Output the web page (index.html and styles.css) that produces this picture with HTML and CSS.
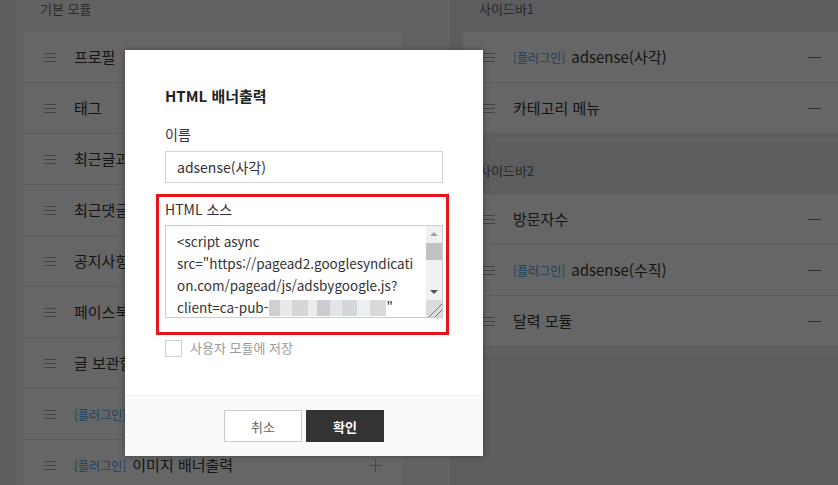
FILE: index.html
```html
<!DOCTYPE html>
<html lang="ko">

<head>
    <meta charset="UTF-8">
    <meta name="viewport" content="width=device-width, initial-scale=1.0">
    <title>사이드바 설정</title>
    <link rel="stylesheet" href="styles.css">
</head>

<body>

    <div class="board">
        <section class="col col--modules">
            <h3 class="col__title">기본 모듈</h3>
            <ul class="module-list">
                <li class="module"><span class="module__handle"></span><span class="module__name">프로필</span><span class="module__add"></span></li>
                <li class="module"><span class="module__handle"></span><span class="module__name">태그</span><span class="module__add"></span></li>
                <li class="module"><span class="module__handle"></span><span class="module__name">최근글과 인기글</span><span class="module__add"></span></li>
                <li class="module"><span class="module__handle"></span><span class="module__name">최근댓글</span><span class="module__add"></span></li>
                <li class="module"><span class="module__handle"></span><span class="module__name">공지사항</span><span class="module__add"></span></li>
                <li class="module"><span class="module__handle"></span><span class="module__name">페이스북</span><span class="module__add"></span></li>
                <li class="module"><span class="module__handle"></span><span class="module__name">글 보관함</span><span class="module__add"></span></li>
                <li class="module"><span class="module__handle"></span><span class="module__name"><span class="module__tag">[플러그인]</span>HTML 배너출력</span><span class="module__add"></span></li>
                <li class="module"><span class="module__handle"></span><span class="module__name"><span class="module__tag">[플러그인]</span>이미지 배너출력</span><span class="module__add"></span></li>
            </ul>
        </section>

        <div class="board__gap"></div>

        <section class="col col--sidebars">
            <div class="sidebar">
                <h3 class="col__title">사이드바1</h3>
                <ul class="module-list">
                    <li class="module"><span class="module__handle"></span><span class="module__name"><span class="module__tag">[플러그인]</span>adsense(사각)</span><span class="module__remove"></span></li>
                    <li class="module"><span class="module__handle"></span><span class="module__name">카테고리 메뉴</span><span class="module__remove"></span></li>
                </ul>
            </div>
            <div class="sidebar">
                <h3 class="col__title">사이드바2</h3>
                <ul class="module-list">
                    <li class="module"><span class="module__handle"></span><span class="module__name">방문자수</span><span class="module__remove"></span></li>
                    <li class="module"><span class="module__handle"></span><span class="module__name"><span class="module__tag">[플러그인]</span>adsense(수직)</span><span class="module__remove"></span></li>
                    <li class="module"><span class="module__handle"></span><span class="module__name">달력 모듈</span><span class="module__remove"></span></li>
                </ul>
            </div>
        </section>
    </div>

    <div class="dim"></div>

    <div class="modal">
        <div class="modal__body">
            <h2 class="modal__title">HTML 배너출력</h2>

            <label class="field__label">이름</label>
            <div class="input">adsense(사각)</div>

            <div class="field field--marked">
                <label class="field__label field__label--tight">HTML 소스</label>
                <div class="code">
                    <div class="code__text">
                        <div>&lt;script async</div>
                        <div>src="https://pagead2.googlesyndicati</div>
                        <div>on.com/pagead/js/adsbygoogle.js?</div>
                        <div>client=ca-pub-<span class="code__blur"></span>"</div>
                    </div>
                    <div class="code__bar">
                        <span class="code__arrow code__arrow--up"></span>
                        <span class="code__thumb"></span>
                        <span class="code__track"></span>
                        <span class="code__arrow code__arrow--down"></span>
                        <span class="code__grip"></span>
                    </div>
                </div>
            </div>

            <label class="check">
                <span class="check__box"></span>
                <span class="check__text">사용자 모듈에 저장</span>
            </label>
        </div>

        <div class="modal__foot">
            <button class="btn">취소</button>
            <button class="btn btn--primary">확인</button>
        </div>
    </div>

</body>

</html>
```

FILE: styles.css
```css
body{
    margin: 0;
    width: 838px;
    height: 485px;
    overflow: hidden;
    position: relative;
    background-color: #e6e8ec;
    font-family: "Noto Sans CJK KR", "Noto Sans", sans-serif;
    color: #333;
}

ul{
    margin: 0;
    padding: 0;
    list-style: none;
}

/* board behind the popup */
.board{
    display: flex;
    align-items: flex-start;
    margin-top: -20px;
    padding-left: 15px;
}

.col--modules{
    flex: none;
    width: 395px;
    box-sizing: border-box;
    padding: 0 8px 60px 9px;
    background-color: #f5f5f6;
}

.board__gap{
    flex: none;
    width: 40px;
    align-self: stretch;
    background-color: #f8f8f8;
}

.col--sidebars{
    flex: none;
    width: 391px;
    box-sizing: border-box;
    padding-left: 13px;
}

.col__title{
    margin: 0;
    height: 52px;
    box-sizing: border-box;
    padding: 20px 0 0 16px;
    font-size: 13px;
    line-height: 18px;
    font-weight: normal;
    color: #666;
}

.sidebar .module-list{
    padding-bottom: 7px;
    border-bottom: 1px solid #f6f6f6;
    background-color: #f0f1f2;
}

.module{
    display: flex;
    align-items: center;
    height: 50px;
    padding: 0 20px;
    background-color: #fff;
    border-bottom: 1px solid #e6e6e6;
}

.module__handle{
    flex: none;
    width: 12px;
    height: 9px;
    margin-right: 18px;
    background: repeating-linear-gradient(#a8a8a8 0 1px, transparent 1px 4px);
}

.module__name{
    flex: 1;
    font-size: 15px;
    line-height: 20px;
    color: #333;
    white-space: nowrap;
}

.module__tag{
    margin-right: 6px;
    font-size: 12px;
    color: #4a9ff0;
}

.module__add,
.module__remove{
    flex: none;
    width: 13px;
    height: 13px;
}

.module__add{
    background:
        linear-gradient(#aaa, #aaa) center / 100% 1px no-repeat,
        linear-gradient(#aaa, #aaa) center / 1px 100% no-repeat;
}

.module__remove{
    background: linear-gradient(#777, #777) center / 100% 1px no-repeat;
}

/* popup */
.dim{
    position: absolute;
    top: 0;
    left: 0;
    right: 0;
    bottom: 0;
    background-color: rgba(0, 0, 0, .6);
}

.modal{
    position: absolute;
    left: 125px;
    top: 50px;
    width: 358px;
    height: 406px;
    display: flex;
    flex-direction: column;
    background-color: #fff;
    box-shadow: 0 0 6px rgba(0, 0, 0, .35);
}

.modal__body{
    flex: 1;
    padding: 35px 40px 0;
}

.modal__title{
    margin: 0;
    font-size: 15px;
    line-height: 22px;
    font-weight: bold;
    color: #222;
}

.field__label{
    display: block;
    margin: 17px 0 7px;
    font-size: 14px;
    line-height: 20px;
    color: #333;
}

.field__label--tight{
    margin: 0 0 6px;
}

.input{
    height: 32px;
    box-sizing: border-box;
    padding: 0 11px;
    border: 1px solid #d3d6db;
    font-size: 14px;
    line-height: 30px;
    color: #333;
}

.field--marked{
    margin: 11px -6px 0 -9px;
    padding: 2px 3px 14px 6px;
    border: 3px solid #e8141c;
}

.code{
    display: flex;
    height: 93px;
    box-sizing: border-box;
    border: 1px solid #c9ced6;
}

.code__text{
    flex: 1;
    overflow: hidden;
    padding: 4px 0 0 11px;
    font-size: 13.5px;
    line-height: 22px;
    color: #333;
    white-space: nowrap;
}

.code__blur{
    display: inline-block;
    width: 117px;
    height: 16px;
    margin-left: 1px;
    vertical-align: -3px;
    background: linear-gradient(90deg,
        #cfd0d2 0 9%, #e9e9ea 9% 20%, #d6d6d8 20% 33%, #ececec 33% 41%,
        #c9ccd3 41% 52%, #e4e4e6 52% 62%, #d3d6db 62% 75%, #eeeeee 75% 86%, #d9d9da 86% 100%);
}

.code__bar{
    flex: none;
    width: 16px;
    display: flex;
    flex-direction: column;
    background-color: #f1f1f1;
}

.code__arrow{
    flex: none;
    height: 16px;
    position: relative;
}

.code__arrow::after{
    content: "";
    position: absolute;
    left: 4px;
    top: 6px;
    border-left: 4px solid transparent;
    border-right: 4px solid transparent;
}

.code__arrow--up::after{
    border-bottom: 4px solid #a3a3a3;
}

.code__arrow--down::after{
    border-top: 4px solid #505050;
}

.code__thumb{
    flex: none;
    height: 17px;
    margin-top: 1px;
    background-color: #c1c1c1;
}

.code__track{
    flex: 1;
}

.code__grip{
    flex: none;
    height: 17px;
    background:
        linear-gradient(135deg, transparent 58%, #777 58% 63%, transparent 63% 76%, #777 76% 81%, transparent 81%),
        #dcdcdc;
}

.check{
    display: flex;
    align-items: center;
    gap: 8px;
    margin-top: 4px;
}

.check__box{
    width: 17px;
    height: 17px;
    box-sizing: border-box;
    border: 1px solid #cfcfcf;
}

.check__text{
    font-size: 13px;
    line-height: 18px;
    color: #999;
}

.modal__foot{
    flex: none;
    height: 60px;
    display: flex;
    justify-content: center;
    align-items: center;
    gap: 4px;
    background-color: #fafafa;
    border-top: 1px solid #f1f1f1;
}

.btn{
    width: 78px;
    height: 32px;
    padding: 0;
    border: 1px solid #ccc;
    background-color: #fff;
    color: #666;
    font-family: inherit;
    font-size: 13px;
}

.btn--primary{
    background-color: #333;
    border-color: #333;
    color: #fff;
    font-weight: bold;
}
```
